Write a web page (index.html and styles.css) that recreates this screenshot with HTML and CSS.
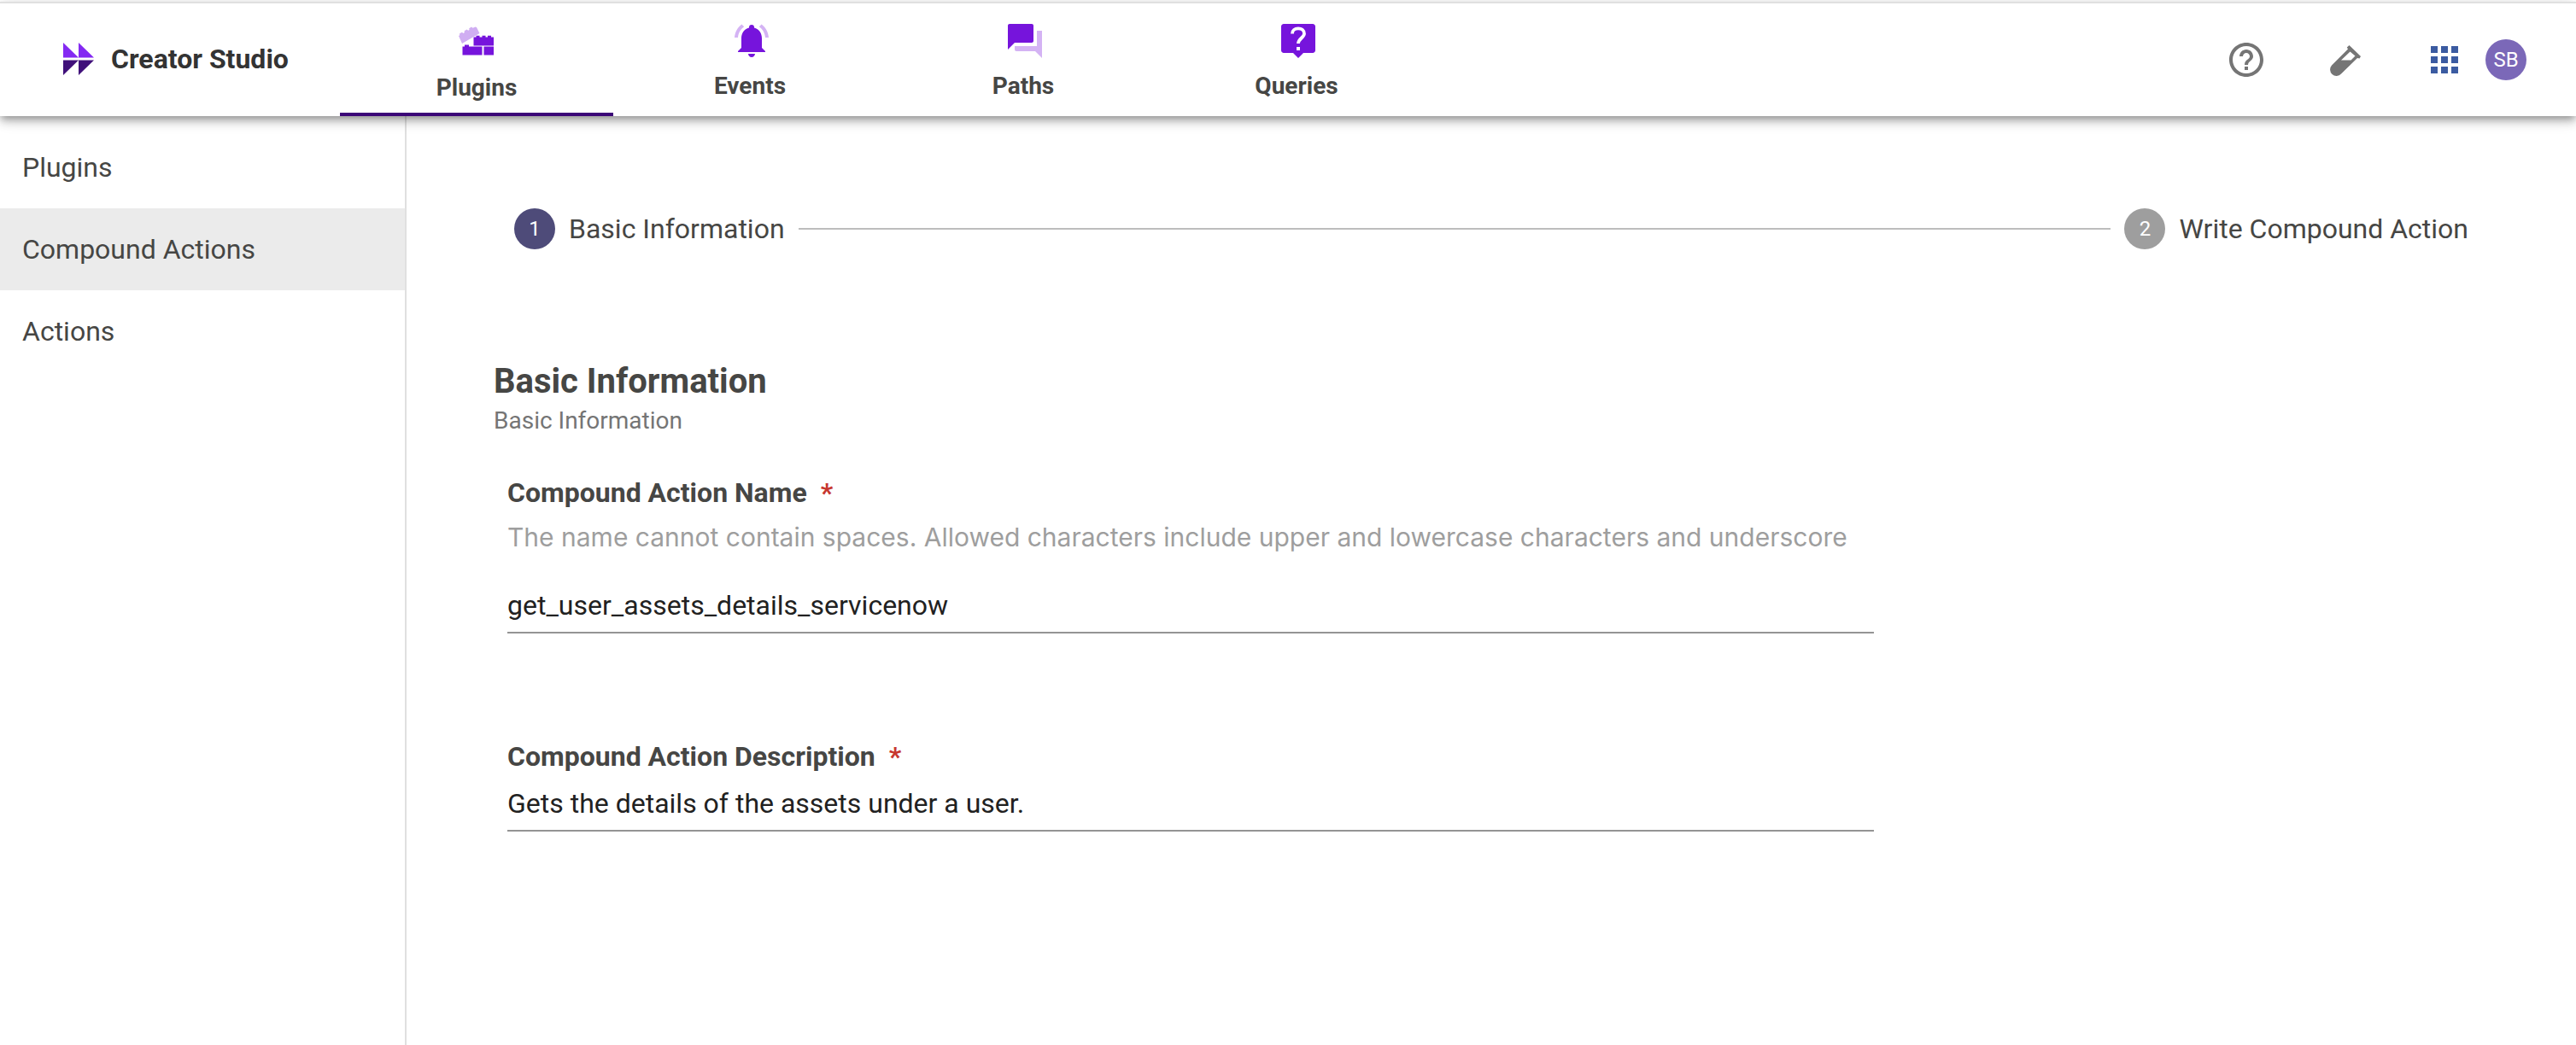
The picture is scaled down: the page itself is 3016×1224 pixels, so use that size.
FILE: index.html
```html
<!DOCTYPE html>
<html lang="en">
<head>
  <meta charset="utf-8">
  <meta name="viewport" content="width=device-width, initial-scale=1">
  <title>Creator Studio</title>
  <link rel="stylesheet" href="styles.css">
</head>
<body>
  <header class="topbar">
    <a class="brand" href="#">
      <svg class="brand-logo" viewBox="0 0 36 38" aria-hidden="true">
        <path fill="#8429f2" d="M0 0l18 17.500H0zM18 0l18 17.500H18z"/>
        <path fill="#40107a" d="M0 20.500h18L0 38zM18 20.500h18L18 38z"/>
      </svg>
      <span>Creator Studio</span>
    </a>
    <nav class="tabs" aria-label="Sections">
      <a class="tab tab-active" href="#">
        <svg class="tab-icon tab-icon-tall" viewBox="0 0 48 50" aria-hidden="true">
          <path fill="#d0aef2" d="M1 18l1.300-.8-.4-1.700 3-1.700 1.500 1.200 1.500-.9-.3-1.800 3-1.700 1.500 1.200 1.400-.8-.3-1.800 2.800-1.600 1.600 1.100 2.900-1.200 1.500.6 3.500 6.900L5 27z"/>
          <path fill="#7614dc" d="M18.500 19.500h3v-1.800h4v1.800h3v-1.800h4v1.800h2.500v-1.800h4v1.800h3V29.500H18.500z"/>
          <path fill="#7614dc" d="M5.500 30.500h2.500v-2h5v2h15.500V40.500h-23zM30.500 30.500H42V40.500H30.500z"/>
        </svg>
        <span>Plugins</span>
      </a>
      <a class="tab" href="#">
        <svg class="tab-icon" viewBox="0 0 24 24" aria-hidden="true">
          <path fill="#7614dc" d="M18 16v-5.500c0-3.100-1.600-5.600-4.500-6.300V4a1.500 1.500 0 0 0-3 0v.2C7.600 4.900 6 7.400 6 10.500V16l-2 2v.5h16V18zM12 21.500c1.100 0 2-.9 2-2h-4c0 1.100.9 2 2 2z"/>
          <path fill="#d4b3f4" d="M7.600 3.600L6.200 2.200C3.800 4 2.200 6.800 2 10h2c.2-2.600 1.500-5 3.600-6.400zM20 10h2c-.2-3.200-1.800-6-4.200-7.800l-1.400 1.400C18.500 5 19.800 7.400 20 10z"/>
        </svg>
        <span>Events</span>
      </a>
      <a class="tab" href="#">
        <svg class="tab-icon" viewBox="0 0 24 24" aria-hidden="true">
          <path fill="#7614dc" d="M17 12V3c0-.55-.45-1-1-1H3c-.55 0-1 .45-1 1v14l4-4h10c.55 0 1-.45 1-1z"/>
          <path fill="#d4b3f4" d="M22 6h-3v9H6v2c0 .55.45 1 1 1h11l4 4z"/>
        </svg>
        <span>Paths</span>
      </a>
      <a class="tab" href="#">
        <svg class="tab-icon" viewBox="0 0 24 24" aria-hidden="true">
          <path fill="#7614dc" d="M20.500 2h-17C2.700 2 2 2.700 2 3.500v14c0 .8.700 1.500 1.500 1.500H9l3 3 3-3h5.500c.8 0 1.500-.7 1.500-1.500v-14c0-.8-.7-1.500-1.500-1.500z"/>
          <path fill="none" stroke="#fff" stroke-width="1.900" d="M8.500 7.700c0-2 1.500-3 3.500-3s3.500 1.100 3.500 3c0 2.300-3.500 2.900-3.500 5.800"/>
          <path fill="#fff" d="M11 15.500h2v2h-2z"/>
        </svg>
        <span>Queries</span>
      </a>
    </nav>
    <div class="tools">
      <button class="tool" type="button" aria-label="Help">
        <svg viewBox="0 0 24 24" aria-hidden="true">
          <path fill="#757575" d="M11 18h2v-2h-2v2zm1-16C6.480 2 2 6.480 2 12s4.480 10 10 10 10-4.480 10-10S17.520 2 12 2zm0 18c-4.410 0-8-3.590-8-8s3.590-8 8-8 8 3.590 8 8-3.590 8-8 8zm0-14c-2.210 0-4 1.790-4 4h2c0-1.100.9-2 2-2s2 .9 2 2c0 2-3 1.750-3 5h2c0-2.250 3-2.500 3-5 0-2.210-1.790-4-4-4z"/>
        </svg>
      </button>
      <button class="tool" type="button" aria-label="Test lab">
        <svg viewBox="0 0 48 48" aria-hidden="true">
          <path fill="#757575" fill-rule="evenodd" d="M28.500 7L42 20l-1.500 2.500-2.500-.5L19 40.500A7.300 7.300 0 0 1 8 30.500L27 11.500 25.800 9.500zM29.500 14.500L19 24.500h11.500L35.500 19.500z"/>
        </svg>
      </button>
      <button class="tool tool-apps" type="button" aria-label="Apps">
        <svg viewBox="0 0 24 24" aria-hidden="true">
          <path fill="#3b5ba1" d="M4 8h4V4H4zm6 12h4v-4h-4zm-6 0h4v-4H4zm0-6h4v-4H4zm6 0h4v-4h-4zm6-10v4h4V4zm-6 4h4V4h-4zm6 6h4v-4h-4zm0 6h4v-4h-4z"/>
        </svg>
      </button>
      <button class="avatar" type="button" aria-label="Account SB">SB</button>
    </div>
  </header>

  <div class="shell">
    <nav class="sidebar" aria-label="Plugins menu">
      <a class="side-link" href="#">Plugins</a>
      <a class="side-link side-link-active" href="#">Compound Actions</a>
      <a class="side-link" href="#">Actions</a>
    </nav>

    <main class="content">
      <ol class="stepper">
        <li class="step"><span class="step-dot step-dot-active">1</span>Basic Information</li>
        <li class="step-line" role="presentation"></li>
        <li class="step"><span class="step-dot">2</span>Write Compound Action</li>
      </ol>

      <h1 class="title">Basic Information</h1>
      <p class="subtitle">Basic Information</p>

      <form class="form">
        <div class="field">
          <label class="label" for="action-name">Compound Action Name <span class="required">*</span></label>
          <p class="hint" id="name-hint">The name cannot contain spaces. Allowed characters include upper and lowercase characters and underscore</p>
          <input class="input" id="action-name" type="text" aria-describedby="name-hint" value="get_user_assets_details_servicenow">
        </div>
        <div class="field">
          <label class="label" for="action-description">Compound Action Description <span class="required">*</span></label>
          <input class="input" id="action-description" type="text" value="Gets the details of the assets under a user.">
        </div>
      </form>
    </main>
  </div>
</body>
</html>
```
FILE: styles.css
```css
* {
  box-sizing: border-box;
}

body {
  display: flex;
  flex-direction: column;
  min-height: 100vh;
  margin: 0;
  padding-top: 2px;
  background: #fff;
  color: #464644;
  font: 32px/48px Roboto, "Liberation Sans", sans-serif;
}

a {
  color: inherit;
  text-decoration: none;
}

button {
  padding: 0;
  border: 0;
  background: none;
  font: inherit;
  cursor: pointer;
}

/* Top bar */

.topbar {
  position: relative;
  display: flex;
  align-items: stretch;
  min-height: 134px;
  border-top: 2px solid #e0e0e0;
  background: #fff;
  box-shadow:
    0 4px 8px -2px rgba(0, 0, 0, 0.3),
    0 8px 10px rgba(0, 0, 0, 0.14),
    0 2px 20px rgba(0, 0, 0, 0.12);
}

.brand {
  display: flex;
  align-items: center;
  gap: 20px;
  width: 398px;
  padding: 0 0 2px 74px;
  color: #333;
  font-weight: 700;
}

.brand-logo {
  width: 36px;
  height: 38px;
}

.tabs {
  display: flex;
}

.tab {
  display: flex;
  flex-direction: column;
  align-items: center;
  gap: 9px;
  width: 320px;
  padding-top: 20px;
  border-bottom: 4px solid transparent;
  font-size: 28px;
  font-weight: 700;
  line-height: 40px;
}

.tab-active {
  border-bottom-color: #3b0577;
}

.tab-icon {
  width: 48px;
  height: 48px;
  margin-left: 4px;
}

.tab-icon-tall {
  height: 50px;
}

.tools {
  display: flex;
  align-items: center;
  gap: 68px;
  margin-left: auto;
  padding-right: 58px;
}

.tool,
.tool svg {
  display: block;
  width: 48px;
  height: 48px;
}

.tool-apps {
  margin-right: -44px;
}

.avatar {
  width: 48px;
  height: 48px;
  border-radius: 50%;
  background: #7b68b8;
  color: #fff;
  font-size: 24px;
}

/* Page shell */

.shell {
  display: flex;
  flex: 1;
}

.sidebar {
  width: 476px;
  padding-top: 12px;
  border-right: 2px solid #e0e0e0;
}

.side-link {
  display: block;
  padding: 24px 26px;
}

.side-link-active {
  background: #ebebeb;
}

.content {
  flex: 1;
  padding: 108px 102px;
}

/* Stepper */

.stepper {
  display: flex;
  align-items: center;
  gap: 16px;
  margin: 0 0 131px;
  padding: 0 24px;
  list-style: none;
}

.step {
  display: flex;
  gap: 16px;
}

.step-dot {
  width: 48px;
  border-radius: 50%;
  background: #9e9e9e;
  color: #fff;
  font-size: 24px;
  text-align: center;
}

.step-dot-active {
  background: #4e4b79;
}

.step-line {
  flex: 1;
  height: 2px;
  background: #bdbdbd;
}

/* Form */

.title {
  margin: 0 0 2px;
  font-size: 40px;
  font-weight: 700;
}

.subtitle {
  margin: 0 0 40px;
  color: #757575;
  font-size: 28px;
  line-height: 40px;
}

.form {
  display: flex;
  flex-direction: column;
  gap: 120px;
  max-width: 1632px;
  padding: 0 16px;
}

.field {
  display: flex;
  flex-direction: column;
}

.label {
  font-weight: 700;
}

.required {
  margin-left: 8px;
  color: #c7372f;
}

.hint {
  margin: 4px 0 25px;
  color: #9e9e9e;
  font-family: Inter, Roboto, sans-serif;
  font-size: 30px;
}

.input {
  width: 100%;
  height: 64px;
  padding: 0;
  border: 0;
  border-bottom: 2px solid #949494;
  background: none;
  color: #212121;
  font: inherit;
}
```
